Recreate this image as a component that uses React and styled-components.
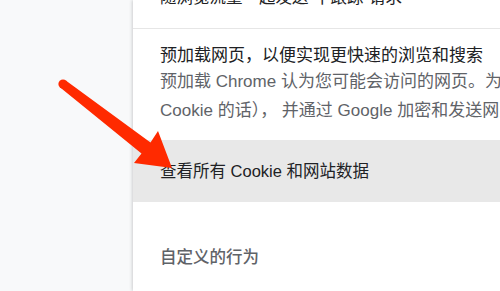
import styled, { createGlobalStyle } from 'styled-components';

const GlobalStyle = createGlobalStyle`
    html, body{
        margin: 0;
        padding: 0;
        width: 500px;
        height: 291px;
        overflow: hidden;
        background: #f8f9fa;
    }
    body{
        font-family: "Liberation Sans", "Noto Sans CJK SC", sans-serif;
    }
`;

export default function App(){
    return(
        <Page>
            <GlobalStyle />
            <Gutter />
            <Card>
                <TopRow>随浏览流量一起发送“不跟踪”请求</TopRow>
                <Section>
                    <Title>预加载网页，以便实现更快速的浏览和搜索</Title>
                    <Desc>预加载 Chrome 认为您可能会访问的网页。为此，Chrome 可能会使用 Cookie（如果您允许使用</Desc>
                    <Desc>Cookie 的话）， 并通过 Google 加密和发送网页，以向网站隐藏您的身份。</Desc>
                </Section>
                <LinkRow>查看所有 Cookie 和网站数据</LinkRow>
                <Heading>自定义的行为</Heading>
            </Card>
            <Arrow viewBox="0 0 500 291" width="500" height="291">
                <circle cx="63" cy="84" r="4.6" fill="#ff2a00" />
                <polygon
                    points="60.2,87.6 65.8,80.4 150.5,142.5 158,131 172,168 134,163 141.5,153.5"
                    fill="#ff2a00"
                />
            </Arrow>
        </Page>
    );
}

const Page = styled.div`
    position: relative;
    display: flex;
    width: 500px;
    height: 291px;
    overflow: hidden;
`;

const Gutter = styled.div`
    flex: 0 0 133px;
    background: #f8f9fa;
`;

const Card = styled.div`
    flex: 0 0 420px;
    background: #ffffff;
    box-shadow: -1px 0 3px rgba(60, 64, 67, 0.22);
    display: flex;
    flex-direction: column;
    white-space: nowrap;
    overflow: hidden;
`;

const TopRow = styled.div`
    margin-top: -16px;
    height: 45px;
    box-sizing: border-box;
    padding: 3px 0 0 27px;
    font-size: 16.5px;
    line-height: 20px;
    color: #202124;
    border-bottom: 1px solid #e6e6e6;
`;

const Section = styled.div`
    padding: 16px 0 15px 27px;
`;

const Title = styled.div`
    font-size: 17px;
    line-height: 22px;
    color: #202124;
`;

const Desc = styled.div`
    font-size: 17px;
    line-height: 29px;
    color: #5f6368;
`;

const LinkRow = styled.div`
    background: #e8e8e8;
    padding: 21px 0 21px 27px;
    font-size: 16.5px;
    line-height: 20px;
    color: #202124;
`;

const Heading = styled.div`
    margin-top: 45px;
    padding-left: 27px;
    font-size: 16.5px;
    line-height: 20px;
    font-weight: 500;
    color: #5f6368;
`;

const Arrow = styled.svg`
    position: absolute;
    left: 0;
    top: 0;
    pointer-events: none;
`;
